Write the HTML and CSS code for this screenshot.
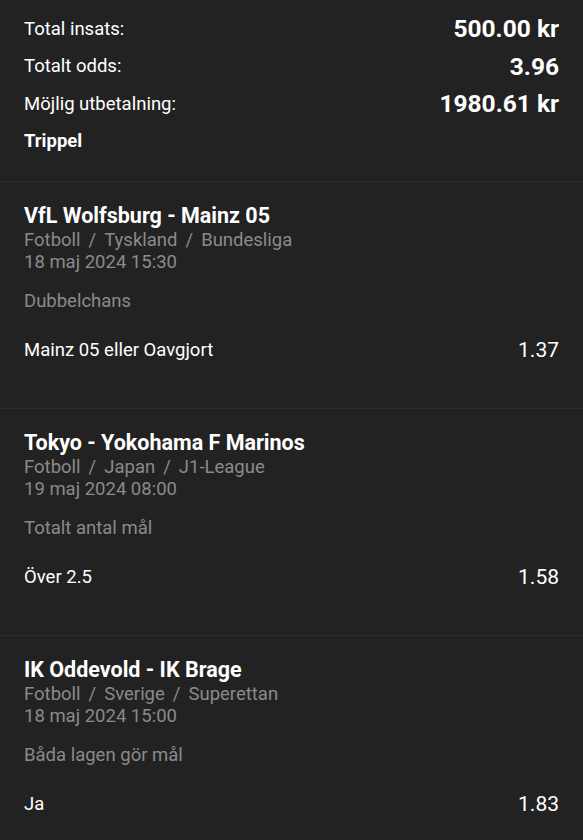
FILE: index.html
```html
<!DOCTYPE html>
<html lang="sv">
<head>
    <meta charset="UTF-8">
    <meta name="viewport" content="width=device-width, initial-scale=1.0">
    <title>Kupong</title>
    <link rel="stylesheet" href="styles.css">
</head>
<body>
    <div class="summary">
        <div class="summary-row">
            <span class="label">Total insats:</span>
            <span class="value">500.00 kr</span>
        </div>
        <div class="summary-row">
            <span class="label">Totalt odds:</span>
            <span class="value">3.96</span>
        </div>
        <div class="summary-row">
            <span class="label">Möjlig utbetalning:</span>
            <span class="value">1980.61 kr</span>
        </div>
        <div class="bet-type">Trippel</div>
    </div>

    <div class="event">
        <div class="event-title">VfL Wolfsburg - Mainz 05</div>
        <div class="event-meta">Fotboll<span class="sep">/</span>Tyskland<span class="sep">/</span>Bundesliga</div>
        <div class="event-meta">18 maj 2024 15:30</div>
        <div class="market">Dubbelchans</div>
        <div class="selection">
            <span>Mainz 05 eller Oavgjort</span>
            <span class="odds">1.37</span>
        </div>
    </div>

    <div class="event">
        <div class="event-title">Tokyo - Yokohama F Marinos</div>
        <div class="event-meta">Fotboll<span class="sep">/</span>Japan<span class="sep">/</span>J1-League</div>
        <div class="event-meta">19 maj 2024 08:00</div>
        <div class="market">Totalt antal mål</div>
        <div class="selection">
            <span>Över 2.5</span>
            <span class="odds">1.58</span>
        </div>
    </div>

    <div class="event">
        <div class="event-title">IK Oddevold - IK Brage</div>
        <div class="event-meta">Fotboll<span class="sep">/</span>Sverige<span class="sep">/</span>Superettan</div>
        <div class="event-meta">18 maj 2024 15:00</div>
        <div class="market">Båda lagen gör mål</div>
        <div class="selection">
            <span>Ja</span>
            <span class="odds">1.83</span>
        </div>
    </div>
</body>
</html>
```

FILE: styles.css
```css
body {
    font-family: Roboto, "Liberation Sans", sans-serif;
    margin: 0;
    padding: 0;
    background-color: #222222;
    color: #ffffff;
}

.summary {
    padding: 10px 24px 21px 24px;
    border-bottom: 1px solid #2d2d2d;
}

.summary-row {
    display: flex;
    justify-content: space-between;
    align-items: center;
    height: 37.5px;
    font-size: 18.5px;
}

.summary-row .value {
    font-size: 24.5px;
    font-weight: bold;
}

.bet-type {
    font-size: 18.5px;
    font-weight: bold;
    height: 37.5px;
    line-height: 37.5px;
}

.event {
    padding: 20px 24px 46.5px 24px;
    border-bottom: 1px solid #2d2d2d;
}

.event-title {
    font-size: 21.5px;
    font-weight: bold;
    line-height: 27px;
}

.event-meta {
    font-size: 18.5px;
    line-height: 22px;
    color: #8a8a8a;
}

.event-meta .sep {
    margin: 0 8px;
}

.market {
    font-size: 18.5px;
    line-height: 22px;
    color: #8a8a8a;
    margin-top: 17px;
}

.selection {
    display: flex;
    justify-content: space-between;
    align-items: center;
    margin-top: 25.5px;
    font-size: 18.5px;
    line-height: 24px;
}

.selection .odds {
    font-size: 21px;
}
```
